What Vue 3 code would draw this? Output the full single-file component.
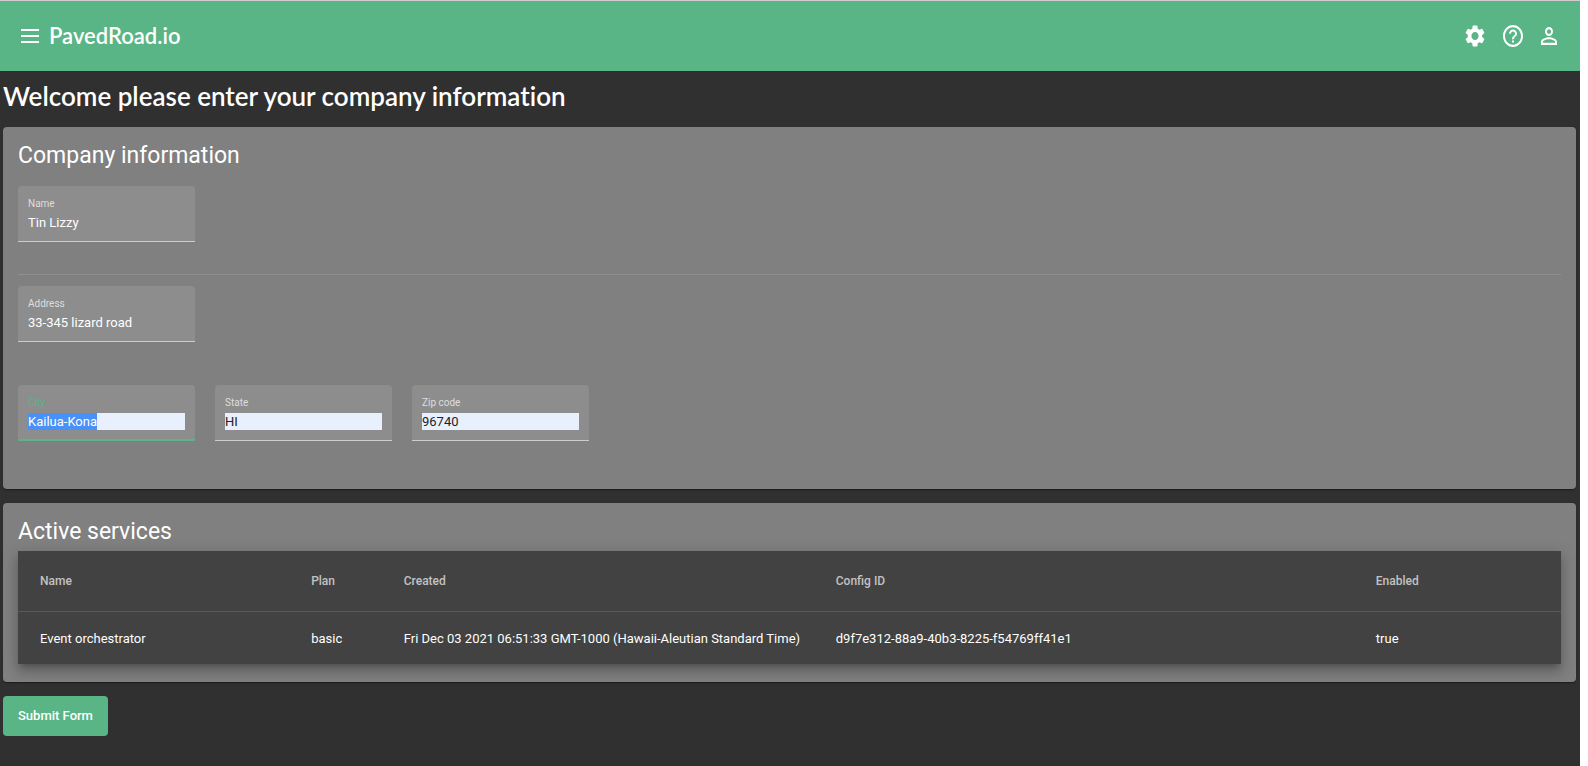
<script setup>
import { onMounted, ref } from 'vue'

const name = ref('Tin Lizzy')
const address = ref('33-345 lizard road')
const locality = ref([
  { id: 'city', label: 'City', value: 'Kailua-Kona' },
  { id: 'state', label: 'State', value: 'HI' },
  { id: 'zip', label: 'Zip code', value: '96740' },
])
const services = [
  {
    name: 'Event orchestrator',
    plan: 'basic',
    created: 'Fri Dec 03 2021 06:51:33 GMT-1000 (Hawaii-Aleutian Standard Time)',
    config: 'd9f7e312-88a9-40b3-8225-f54769ff41e1',
    enabled: 'true',
  },
]
const form = ref(null)

onMounted(() => {
  const city = form.value.querySelector('#city')
  city.focus()
  city.select()
})
</script>

<template>
  <div class="page">
    <header class="toolbar">
      <button class="icon-button" type="button" aria-label="Menu">
        <svg width="18" height="14" viewBox="0 0 18 14"><path d="M0 0h18v2H0zM0 6h18v2H0zM0 12h18v2H0z" /></svg>
      </button>
      <a class="brand" href="#">PavedRoad.io</a>
      <nav class="actions">
        <button class="icon-button" type="button" aria-label="Settings">
          <svg width="20" height="22" viewBox="2 2 20 20" preserveAspectRatio="none">
            <path d="M19.14 12.94c.04-.3.06-.61.06-.94 0-.32-.02-.64-.07-.94l2.03-1.58c.18-.14.23-.41.12-.61l-1.92-3.32c-.12-.22-.37-.29-.59-.22l-2.39.96c-.5-.38-1.03-.7-1.62-.94l-.36-2.54c-.04-.24-.24-.41-.48-.41h-3.84c-.24 0-.43.17-.47.41l-.36 2.54c-.59.24-1.13.57-1.62.94l-2.39-.96c-.22-.08-.47 0-.59.22L2.74 8.87c-.12.21-.08.47.12.61l2.03 1.58c-.05.3-.09.63-.09.94s.02.64.07.94l-2.03 1.58c-.18.14-.23.41-.12.61l1.92 3.32c.12.22.37.29.59.22l2.39-.96c.5.38 1.03.7 1.62.94l.36 2.54c.05.24.24.41.48.41h3.84c.24 0 .44-.17.47-.41l.36-2.54c.59-.24 1.13-.56 1.62-.94l2.39.96c.22.08.47 0 .59-.22l1.92-3.32c.12-.22.07-.47-.12-.61l-2.01-1.58zM12 15.6c-1.98 0-3.6-1.62-3.6-3.6s1.62-3.6 3.6-3.6 3.6 1.62 3.6 3.6-1.62 3.6-3.6 3.6z" />
          </svg>
        </button>
        <button class="icon-button" type="button" aria-label="Help">
          <svg width="20" height="22" viewBox="2 2 20 20" preserveAspectRatio="none">
            <path d="M11 18h2v-2h-2v2zm1-16C6.48 2 2 6.48 2 12s4.48 10 10 10 10-4.48 10-10S17.52 2 12 2zm0 18c-4.41 0-8-3.59-8-8s3.59-8 8-8 8 3.59 8 8-3.59 8-8 8zm0-14c-2.21 0-4 1.79-4 4h2c0-1.1.9-2 2-2s2 .9 2 2c0 2-3 1.750-3 5h2c0-2.250 3-2.500 3-5 0-2.210-1.790-4-4-4z" />
          </svg>
        </button>
        <button class="icon-button" type="button" aria-label="Account">
          <svg width="16" height="18" viewBox="4 4 16 16" preserveAspectRatio="none">
            <path d="M12 5.900c1.160 0 2.100.940 2.100 2.100s-.940 2.100-2.100 2.100S9.900 9.160 9.900 8s.940-2.100 2.100-2.100m0 9c2.970 0 6.100 1.460 6.100 2.100v1.100H5.900V17c0-.640 3.130-2.100 6.100-2.100M12 4C9.790 4 8 5.790 8 8s1.790 4 4 4 4-1.790 4-4-1.790-4-4-4zm0 9c-2.670 0-8 1.340-8 4v3h16v-3c0-2.660-5.330-4-8-4z" />
          </svg>
        </button>
      </nav>
    </header>

    <main>
      <h1>Welcome please enter your company information</h1>
      <form ref="form" @submit.prevent>
        <section class="card company">
          <h2>Company information</h2>
          <div class="field">
            <label for="name">Name</label>
            <input id="name" v-model="name" type="text" />
          </div>
          <hr />
          <div class="field">
            <label for="address">Address</label>
            <input id="address" v-model="address" type="text" />
          </div>
          <div class="row">
            <div v-for="item in locality" :key="item.id" class="field filled">
              <label :for="item.id">{{ item.label }}</label>
              <input :id="item.id" v-model="item.value" type="text" />
            </div>
          </div>
        </section>

        <section class="card services">
          <h2>Active services</h2>
          <table>
            <colgroup>
              <col class="c-name" /><col class="c-plan" /><col class="c-created" /><col class="c-config" /><col />
            </colgroup>
            <thead>
              <tr>
                <th scope="col">Name</th>
                <th scope="col">Plan</th>
                <th scope="col">Created</th>
                <th scope="col">Config ID</th>
                <th scope="col">Enabled</th>
              </tr>
            </thead>
            <tbody>
              <tr v-for="s in services" :key="s.config">
                <td>{{ s.name }}</td>
                <td>{{ s.plan }}</td>
                <td>{{ s.created }}</td>
                <td>{{ s.config }}</td>
                <td>{{ s.enabled }}</td>
              </tr>
            </tbody>
          </table>
        </section>

        <button class="submit" type="submit">Submit Form</button>
      </form>
    </main>
  </div>
</template>

<style>
body {
  background: #fff;
}
</style>

<style scoped>
.page {
  box-sizing: border-box;
  min-height: 100vh;
  margin-right: 8px;
  border-top: 1px solid #d0cdd0;
  background: #303030;
  color: #fff;
  font-family: Roboto, "Liberation Sans", sans-serif;
}
.toolbar {
  display: flex;
  align-items: center;
  height: 70px;
  padding: 0 23px 0 21px;
  background: #59b585;
}
.icon-button {
  display: flex;
  padding: 0;
  border: 0;
  background: none;
}
.icon-button svg {
  fill: #fff;
}
.brand {
  margin-left: 10px;
  color: #fff;
  font: 600 22px/32px Lato, sans-serif;
  text-decoration: none;
}
.actions {
  display: flex;
  align-items: center;
  gap: 18px;
  margin-left: auto;
}
main {
  padding: 8px 4px 8px 3px;
}
h1 {
  margin: 0 0 14px;
  font: 600 26px/34px Lato, sans-serif;
  font-variant-ligatures: none;
}
.card {
  padding: 14px 15px;
  border-radius: 4px;
  background: #808080;
  box-shadow: 0 2px 1px -1px rgba(0, 0, 0, 0.2), 0 1px 1px rgba(0, 0, 0, 0.14), 0 1px 3px rgba(0, 0, 0, 0.12);
}
.company {
  padding-bottom: 48px;
  margin-bottom: 14px;
}
.services {
  padding-bottom: 18px;
  margin-bottom: 14px;
}
h2 {
  margin: 0;
  font-size: 23px;
  font-weight: 400;
  line-height: 30px;
}
.company h2 {
  margin-bottom: 15px;
}
.services h2 {
  margin-bottom: 4px;
}
.field {
  box-sizing: border-box;
  display: flex;
  flex-direction: column;
  width: 177px;
  height: 56px;
  padding: 11px 10px 0;
  border-bottom: 1px solid #ccc;
  border-radius: 4px 4px 0 0;
  background: #8d8d8d;
}
label {
  color: #dedede;
  font-size: 10px;
  line-height: 14px;
}
input {
  width: 100%;
  height: 17px;
  margin-top: 3px;
  padding: 0;
  border: 0;
  outline: 0;
  background: transparent;
  color: #fff;
  font: 400 13px/17px Roboto, sans-serif;
}
.filled input {
  background: #e8f0fe;
  color: #222;
}
input::selection {
  background: #4a90f9;
  color: #fff;
}
.field:focus-within {
  border-bottom: 2px solid #59b585;
}
.field:focus-within label {
  color: #59b585;
}
hr {
  height: 1px;
  margin: 32px 0 11px;
  border: 0;
  background: #8f8f8f;
}
.row {
  display: flex;
  gap: 20px;
  margin-top: 43px;
}
table {
  width: 100%;
  table-layout: fixed;
  border-collapse: collapse;
  background: #424242;
  box-shadow: 0 5px 5px -3px rgba(0, 0, 0, 0.2), 0 8px 10px 1px rgba(0, 0, 0, 0.14), 0 3px 14px 2px rgba(0, 0, 0, 0.12);
}
.c-name {
  width: 19%;
}
.c-plan {
  width: 6%;
}
.c-created {
  width: 28%;
}
.c-config {
  width: 35%;
}
th,
td {
  padding: 0;
  text-align: left;
  white-space: nowrap;
}
th:first-child,
td:first-child {
  padding-left: 22px;
}
th {
  height: 60px;
  border-bottom: 1px solid #5a5a5a;
  color: #c2c2c2;
  font-size: 12px;
  font-weight: 500;
}
td {
  height: 52px;
  font-size: 13px;
}
.submit {
  display: block;
  height: 40px;
  padding: 0 15px;
  border: 0;
  border-radius: 4px;
  background: #59b585;
  color: #fff;
  font: 500 13px/40px Roboto, sans-serif;
}
</style>
